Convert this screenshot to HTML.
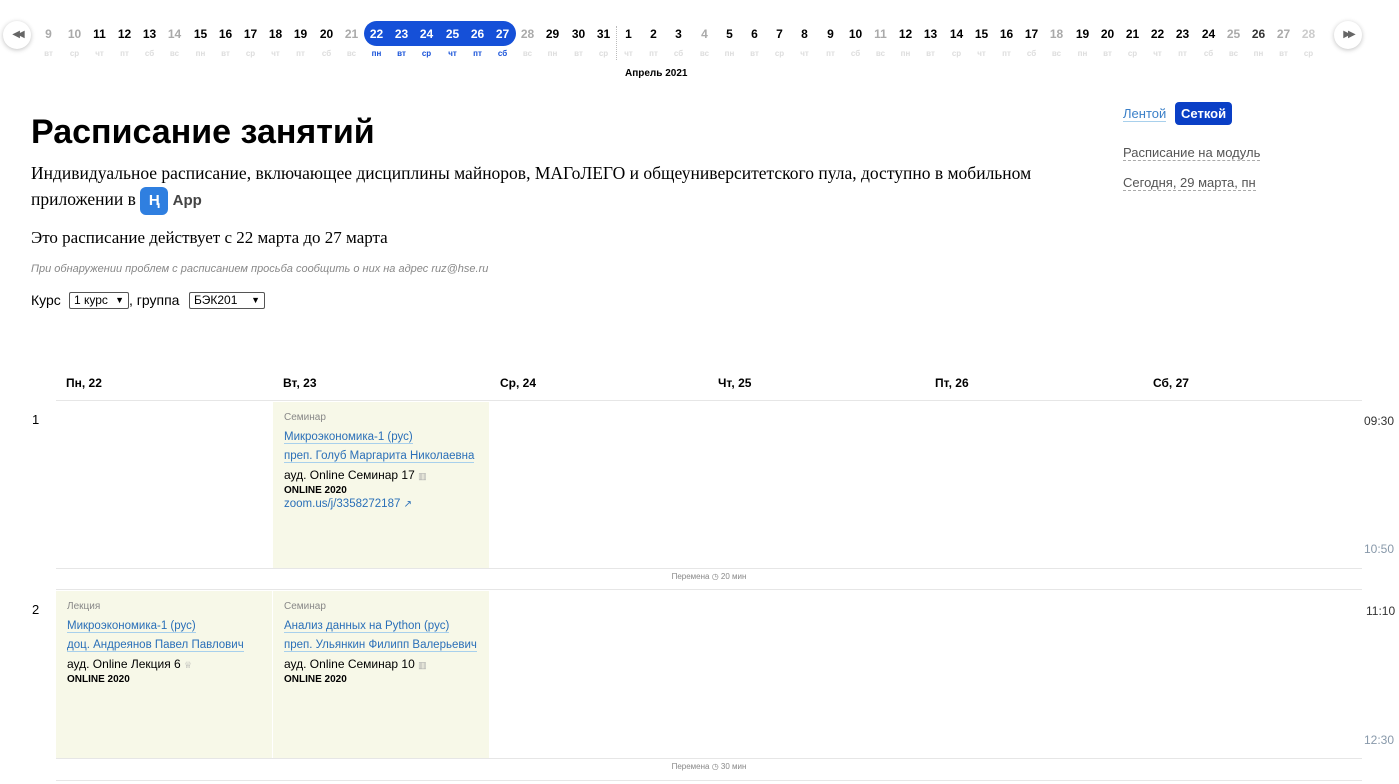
<!DOCTYPE html>
<html><head><meta charset="utf-8"><style>
body{margin:0;width:1399px;height:784px;overflow:hidden;background:#fff;font-family:"Liberation Sans",Arial,sans-serif;color:#000;position:relative}
.d{position:absolute;width:25px;text-align:center;font-size:12px;font-weight:bold;top:27px}
.w{position:absolute;width:25px;text-align:center;font-size:8px;top:49px;color:#ddd;font-weight:bold}
.g{color:#aaa}.h{color:#fff}.hw{color:#1550d8}
.pill{position:absolute;left:364px;top:21px;width:152px;height:25px;background:#1550d8;border-radius:13px}
.btn{position:absolute;top:21px;width:28px;height:28px;border-radius:50%;background:#fff;box-shadow:0 1px 5px rgba(0,0,0,.25);font-size:10px;color:#666;text-align:center;line-height:28px;letter-spacing:-3px}
.abs{position:absolute}
a{color:#2a6fb8;text-decoration:none;border-bottom:1px solid #a8d0ec}
.cell{position:absolute;background:#f7f8e8;width:216px}
.cell .t{font-size:10px;color:#888;margin:10px 0 0 11px}
.cell .l{font-size:11.5px;margin:7px 0 0 11px;line-height:15px}
.cell .l a{color:#2a6fb8}
.cell .r{font-size:12px;margin:4px 0 0 11px}
.cell .o{font-size:10px;font-weight:bold;margin:3px 0 0 11px}
.hl{position:absolute;height:1px;background:#e6e6e6;left:56px;width:1306px}
.hd{position:absolute;top:376px;font-size:12px;font-weight:bold}
.brk{position:absolute;left:56px;width:1306px;text-align:center;font-size:8px;color:#888}
.sel{position:absolute;top:292px;border:1px solid #555;font-size:12px;padding:0 4px;border-radius:2px;height:15px;line-height:15px;box-sizing:content-box;white-space:nowrap}
.sel b{position:absolute;right:4px;top:0;font-size:9px}
</style></head><body>
<div class="pill"></div>
<div class="btn" style="left:3px">◀◀</div>
<div class="btn" style="left:1334px">▶▶</div>
<span class="d g" style="left:36px">9</span><span class="w" style="left:36px">вт</span>
<span class="d g" style="left:62px">10</span><span class="w" style="left:62px">ср</span>
<span class="d" style="left:87px">11</span><span class="w" style="left:87px">чт</span>
<span class="d" style="left:112px">12</span><span class="w" style="left:112px">пт</span>
<span class="d" style="left:137px">13</span><span class="w" style="left:137px">сб</span>
<span class="d g" style="left:162px">14</span><span class="w" style="left:162px">вс</span>
<span class="d" style="left:188px">15</span><span class="w" style="left:188px">пн</span>
<span class="d" style="left:213px">16</span><span class="w" style="left:213px">вт</span>
<span class="d" style="left:238px">17</span><span class="w" style="left:238px">ср</span>
<span class="d" style="left:263px">18</span><span class="w" style="left:263px">чт</span>
<span class="d" style="left:288px">19</span><span class="w" style="left:288px">пт</span>
<span class="d" style="left:314px">20</span><span class="w" style="left:314px">сб</span>
<span class="d g" style="left:339px">21</span><span class="w" style="left:339px">вс</span>
<span class="d h" style="left:364px">22</span><span class="w hw" style="left:364px">пн</span>
<span class="d h" style="left:389px">23</span><span class="w hw" style="left:389px">вт</span>
<span class="d h" style="left:414px">24</span><span class="w hw" style="left:414px">ср</span>
<span class="d h" style="left:440px">25</span><span class="w hw" style="left:440px">чт</span>
<span class="d h" style="left:465px">26</span><span class="w hw" style="left:465px">пт</span>
<span class="d h" style="left:490px">27</span><span class="w hw" style="left:490px">сб</span>
<span class="d g" style="left:515px">28</span><span class="w" style="left:515px">вс</span>
<span class="d" style="left:540px">29</span><span class="w" style="left:540px">пн</span>
<span class="d" style="left:566px">30</span><span class="w" style="left:566px">вт</span>
<span class="d" style="left:591px">31</span><span class="w" style="left:591px">ср</span>
<div class="abs" style="left:616px;top:26px;height:34px;border-left:1px dotted #bbb"></div>
<span class="d" style="left:616px">1</span><span class="w" style="left:616px">чт</span>
<span class="d" style="left:641px">2</span><span class="w" style="left:641px">пт</span>
<span class="d" style="left:666px">3</span><span class="w" style="left:666px">сб</span>
<span class="d g" style="left:692px">4</span><span class="w" style="left:692px">вс</span>
<span class="d" style="left:717px">5</span><span class="w" style="left:717px">пн</span>
<span class="d" style="left:742px">6</span><span class="w" style="left:742px">вт</span>
<span class="d" style="left:767px">7</span><span class="w" style="left:767px">ср</span>
<span class="d" style="left:792px">8</span><span class="w" style="left:792px">чт</span>
<span class="d" style="left:818px">9</span><span class="w" style="left:818px">пт</span>
<span class="d" style="left:843px">10</span><span class="w" style="left:843px">сб</span>
<span class="d g" style="left:868px">11</span><span class="w" style="left:868px">вс</span>
<span class="d" style="left:893px">12</span><span class="w" style="left:893px">пн</span>
<span class="d" style="left:918px">13</span><span class="w" style="left:918px">вт</span>
<span class="d" style="left:944px">14</span><span class="w" style="left:944px">ср</span>
<span class="d" style="left:969px">15</span><span class="w" style="left:969px">чт</span>
<span class="d" style="left:994px">16</span><span class="w" style="left:994px">пт</span>
<span class="d" style="left:1019px">17</span><span class="w" style="left:1019px">сб</span>
<span class="d g" style="left:1044px">18</span><span class="w" style="left:1044px">вс</span>
<span class="d" style="left:1070px">19</span><span class="w" style="left:1070px">пн</span>
<span class="d" style="left:1095px">20</span><span class="w" style="left:1095px">вт</span>
<span class="d" style="left:1120px">21</span><span class="w" style="left:1120px">ср</span>
<span class="d" style="left:1145px">22</span><span class="w" style="left:1145px">чт</span>
<span class="d" style="left:1170px">23</span><span class="w" style="left:1170px">пт</span>
<span class="d" style="left:1196px">24</span><span class="w" style="left:1196px">сб</span>
<span class="d g" style="left:1221px">25</span><span class="w" style="left:1221px">вс</span>
<span class="d" style="left:1246px;color:#333">26</span><span class="w" style="left:1246px">пн</span>
<span class="d g" style="left:1271px">27</span><span class="w" style="left:1271px">вт</span>
<span class="d" style="left:1296px;color:#ccc">28</span><span class="w" style="left:1296px">ср</span>
<div class="abs" style="left:625px;top:68px;font-size:10px;font-weight:bold">Апрель 2021</div>

<div class="abs" style="left:31px;top:113px;font-size:34px;font-weight:bold">Расписание занятий</div>
<div class="abs" style="left:31px;top:160px;width:1030px;font-family:'Liberation Serif',serif;font-size:17.5px;line-height:26px">Индивидуальное расписание, включающее дисциплины майноров, МАГоЛЕГО и общеуниверситетского пула, доступно в мобильном приложении в <span style="display:inline-block;width:28px;height:28px;background:#2f7fe0;border-radius:6px;vertical-align:middle;color:#fff;font-family:'Liberation Sans';font-weight:bold;text-align:center;line-height:28px;font-size:15px">Ң</span> <b style="font-family:'Liberation Sans';font-size:15px;color:#444">App</b></div>
<div class="abs" style="left:31px;top:228px;font-family:'Liberation Serif',serif;font-size:17px">Это расписание действует с 22 марта до 27 марта</div>
<div class="abs" style="left:31px;top:263px;font-size:11px;font-style:italic;color:#888">При обнаружении проблем с расписанием просьба сообщить о них на адрес ruz@hse.ru</div>
<div class="abs" style="left:31px;top:292px;font-size:14px">Курс</div>
<div class="sel" style="left:69px;width:50px">1 курс<b>▼</b></div>
<div class="abs" style="left:129px;top:292px;font-size:14px">, группа</div>
<div class="sel" style="left:189px;width:66px">БЭК201<b>▼</b></div>

<div class="abs" style="left:1123px;top:106px;font-size:13px"><a style="color:#3a7fc8">Лентой</a></div>
<div class="abs" style="left:1175px;top:102px;background:#0a3fc6;color:#fff;font-weight:bold;font-size:13px;padding:4px 6px;border-radius:4px">Сеткой</div>
<div class="abs" style="left:1123px;top:145px;font-size:13px;color:#555;border-bottom:1px dashed #aaa">Расписание на модуль</div>
<div class="abs" style="left:1123px;top:175px;font-size:13px;color:#555;border-bottom:1px dashed #aaa">Сегодня, 29 марта, пн</div>

<div class="hd" style="left:66px">Пн, 22</div>
<div class="hd" style="left:283px">Вт, 23</div>
<div class="hd" style="left:500px">Ср, 24</div>
<div class="hd" style="left:718px">Чт, 25</div>
<div class="hd" style="left:935px">Пт, 26</div>
<div class="hd" style="left:1153px">Сб, 27</div>
<div class="hl" style="top:400px"></div>
<div class="abs" style="left:32px;top:412px;font-size:13px">1</div>
<div class="abs" style="left:32px;top:602px;font-size:13px">2</div>
<div class="abs" style="left:1364px;top:414px;font-size:12px;color:#333">09:30</div>
<div class="abs" style="left:1364px;top:542px;font-size:12px;color:#8899aa">10:50</div>
<div class="abs" style="left:1366px;top:604px;font-size:12px;color:#333">11:10</div>
<div class="abs" style="left:1364px;top:733px;font-size:12px;color:#8899aa">12:30</div>

<div class="cell" style="left:273px;top:402px;height:166px">
<div class="t">Семинар</div>
<div class="l"><a>Микроэкономика-1 (рус)</a></div>
<div class="l" style="margin-top:4px"><a>преп. Голуб Маргарита Николаевна</a></div>
<div class="r">ауд. Online Семинар 17 <span style="color:#aaa;font-size:9px">▥</span></div>
<div class="o">ONLINE 2020</div>
<div class="l" style="margin-top:1px;color:#2a6fb8">zoom.us/j/3358272187 <span style="font-size:10px">↗</span></div>
</div>
<div class="hl" style="top:568px"></div>
<div class="brk" style="top:572px">Перемена ◷ 20 мин</div>
<div class="hl" style="top:589px"></div>

<div class="cell" style="left:56px;top:591px;height:167px">
<div class="t">Лекция</div>
<div class="l"><a>Микроэкономика-1 (рус)</a></div>
<div class="l" style="margin-top:4px"><a>доц. Андреянов Павел Павлович</a></div>
<div class="r">ауд. Online Лекция 6 <span style="color:#aaa;font-size:9px">♕</span></div>
<div class="o">ONLINE 2020</div>
</div>
<div class="cell" style="left:273px;top:591px;height:167px">
<div class="t">Семинар</div>
<div class="l"><a>Анализ данных на Python (рус)</a></div>
<div class="l" style="margin-top:4px"><a>преп. Ульянкин Филипп Валерьевич</a></div>
<div class="r">ауд. Online Семинар 10 <span style="color:#aaa;font-size:9px">▥</span></div>
<div class="o">ONLINE 2020</div>
</div>
<div class="hl" style="top:758px"></div>
<div class="brk" style="top:762px">Перемена ◷ 30 мин</div>
<div class="hl" style="top:780px"></div>
</body></html>
